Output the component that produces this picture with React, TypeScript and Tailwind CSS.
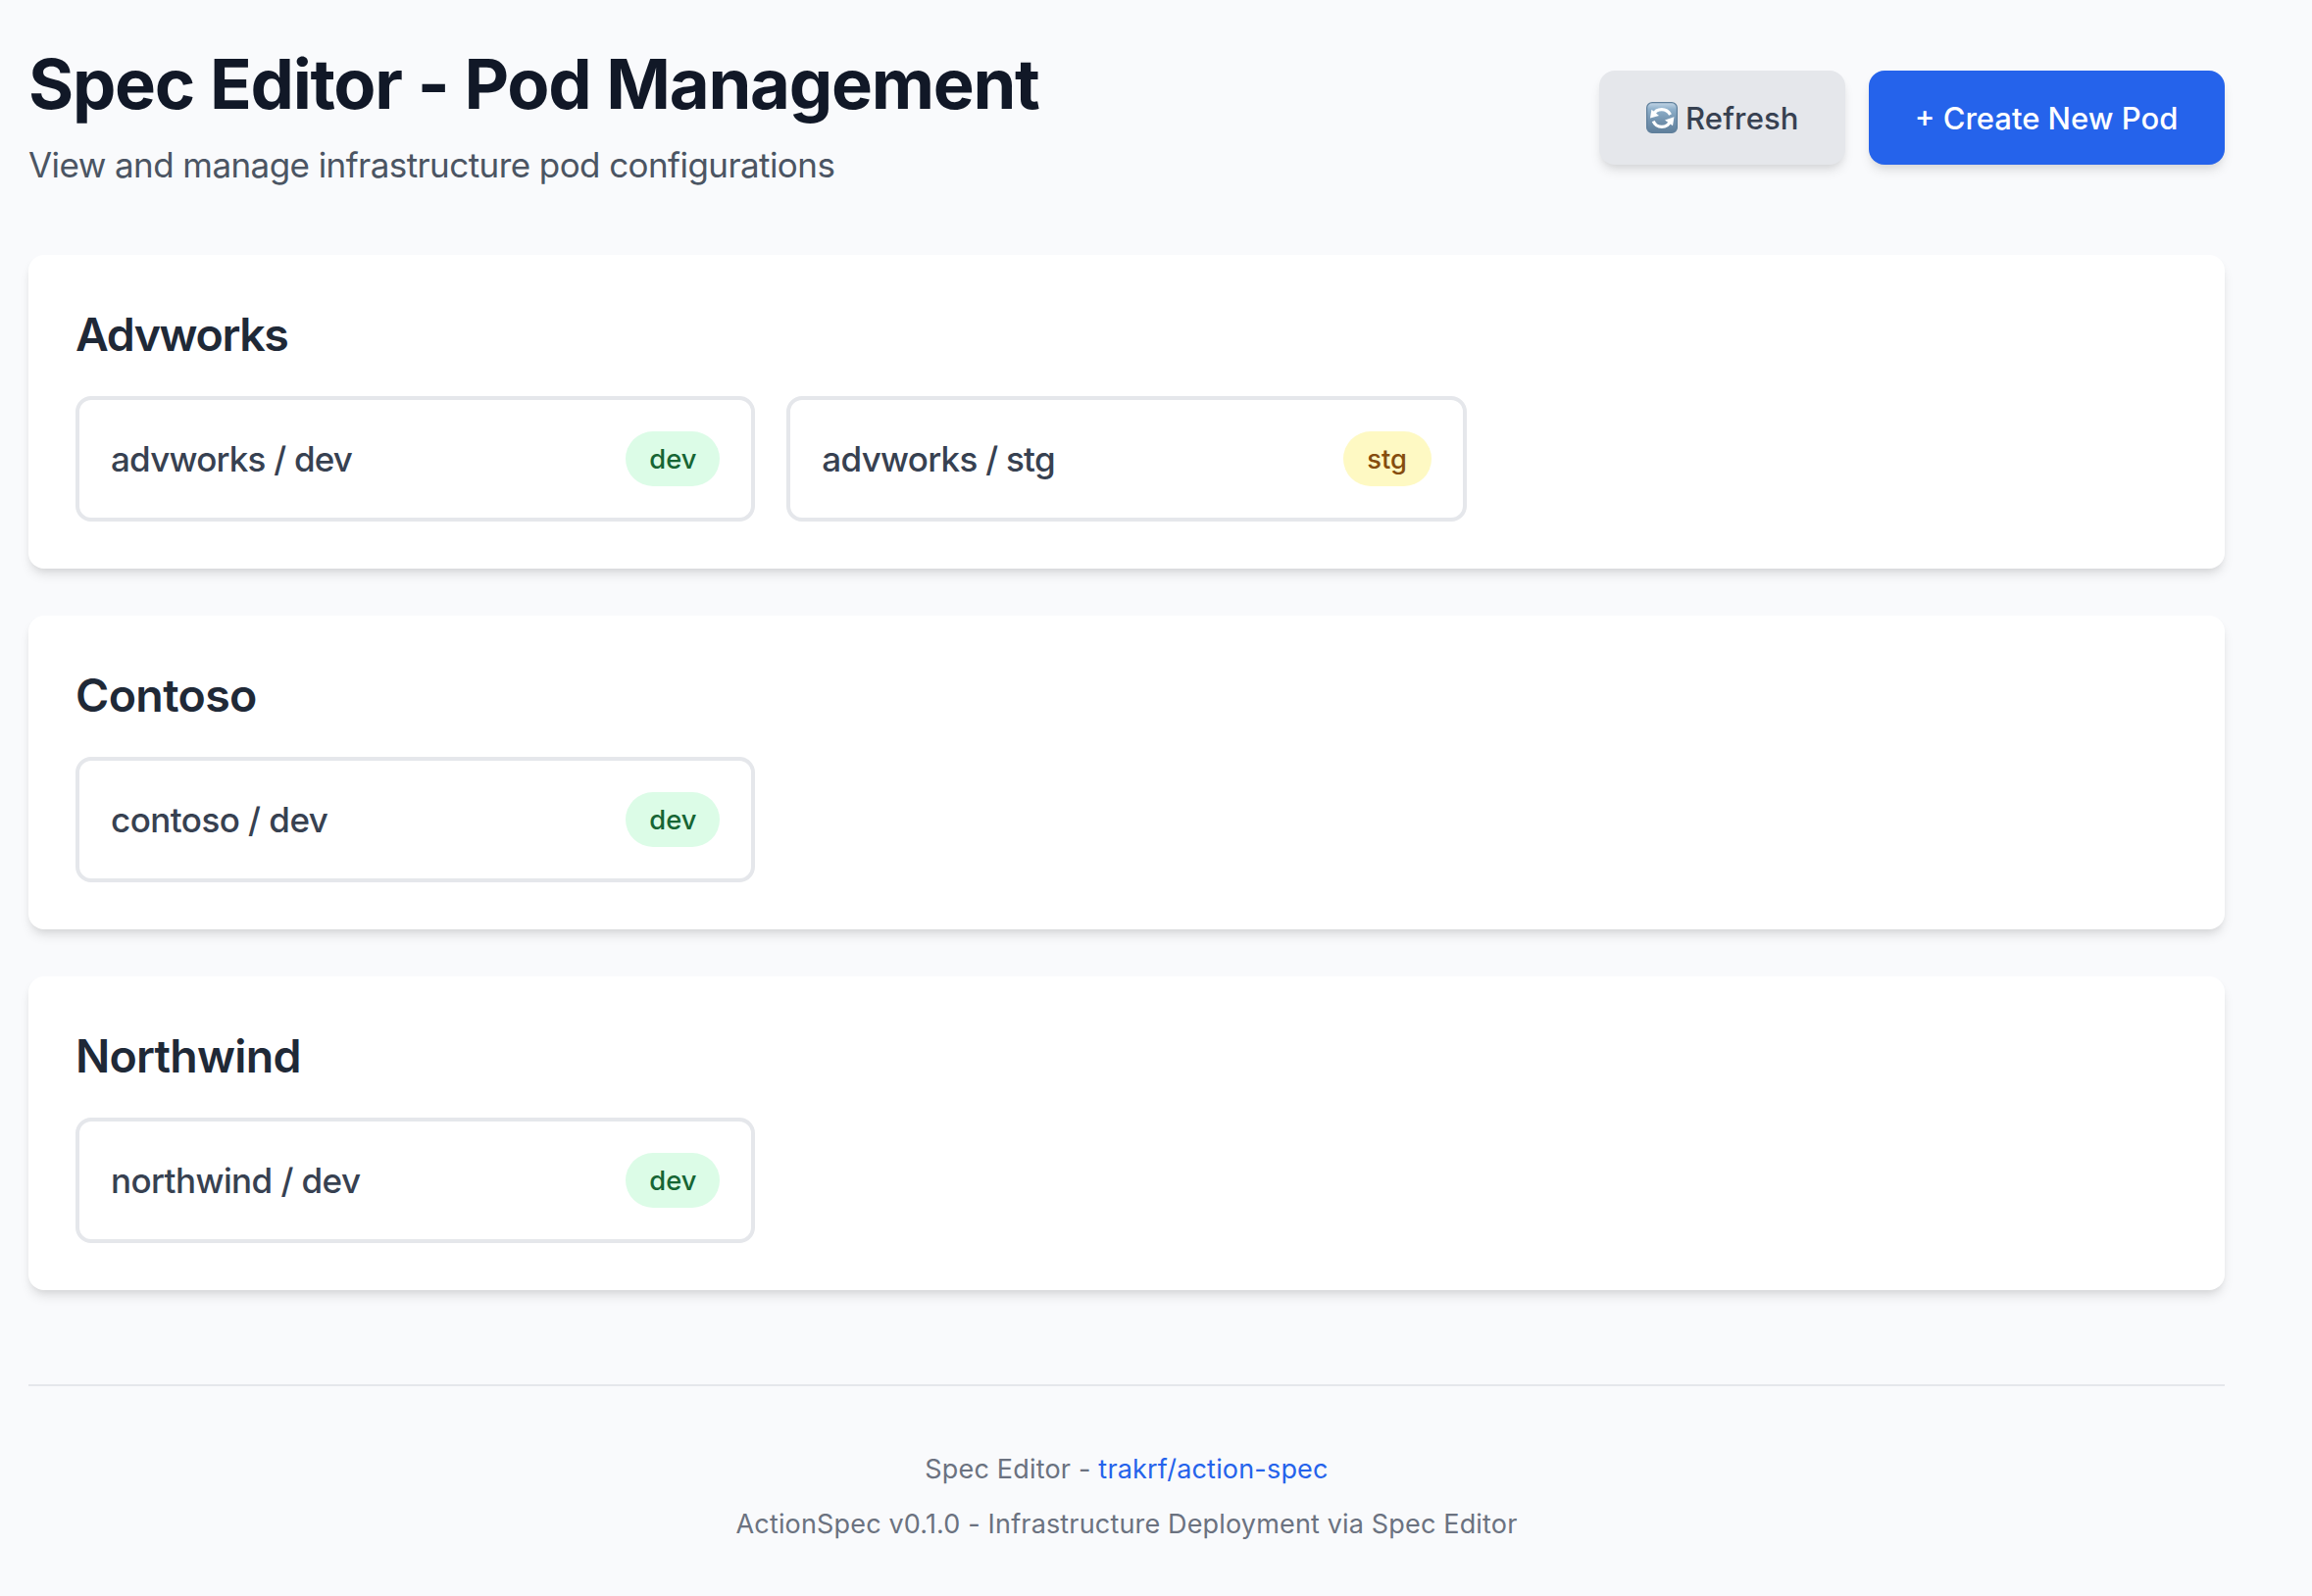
type Env = "dev" | "stg";

interface Pod {
  name: string;
  env: Env;
  tracking: string;
}

interface Customer {
  title: string;
  tracking: string;
  pods: Pod[];
}

const customers: Customer[] = [
  {
    title: "Advworks",
    tracking: "tracking-[-0.0302em]",
    pods: [
      { name: "advworks", env: "dev", tracking: "tracking-[-0.0225em]" },
      { name: "advworks", env: "stg", tracking: "tracking-[-0.0205em]" },
    ],
  },
  {
    title: "Contoso",
    tracking: "tracking-[-0.0135em]",
    pods: [{ name: "contoso", env: "dev", tracking: "tracking-[-0.0155em]" }],
  },
  {
    title: "Northwind",
    tracking: "tracking-[-0.0165em]",
    pods: [{ name: "northwind", env: "dev", tracking: "tracking-[-0.0165em]" }],
  },
];

const badgeStyles: Record<Env, string> = {
  dev: "bg-[#dcfce7] text-[#166534] w-24",
  stg: "bg-[#fef9c3] text-[#854d0e] w-[90px]",
};

function RefreshIcon() {
  return (
    <svg viewBox="0 0 32 32" className="size-8 shrink-0" aria-hidden="true">
      <defs>
        <linearGradient id="tile" x1="0" y1="0" x2="0" y2="1">
          <stop offset="0" stopColor="#c3d6e6" />
          <stop offset="0.22" stopColor="#8fb0cb" />
          <stop offset="0.6" stopColor="#7393af" />
          <stop offset="1" stopColor="#5f7f9b" />
        </linearGradient>
      </defs>
      <rect x="0.6" y="0.6" width="30.8" height="30.8" rx="5.5" fill="url(#tile)" stroke="#5f7f9b" strokeWidth="1.2" />
      <g fill="none" stroke="#fff" strokeWidth="3.2">
        <path d="M7.4 13C8.8 9.4 12 7.6 15.8 7.6c3.8 0 6.9 1.9 8.7 5.4" />
        <path d="M24.6 19.2c-1.4 3.900-4.800 6.200-8.800 6.200-3.800 0-7-2.200-8.600-5.800" />
      </g>
      <path fill="#fff" d="M5.4 7.8 4 16.4 13 14Z" />
      <path fill="#fff" d="M28.4 15.2 19 18.4 27 24.2Z" />
    </svg>
  );
}

function PodCard({ name, env, tracking }: Pod) {
  return (
    <div className="flex h-32 items-center justify-between rounded-2xl border-4 border-[#e5e7eb] bg-white px-8">
      <span className={`text-[35px] leading-[56px] font-medium text-[#374151] ${tracking}`}>
        {name} / {env}
      </span>
      <span
        className={`rounded-full pt-[9px] pb-[7px] text-center text-[27.3px] leading-10 font-medium ${badgeStyles[env]}`}
      >
        {env}
      </span>
    </div>
  );
}

function CustomerSection({ title, tracking, pods }: Customer) {
  return (
    <section className="rounded-2xl bg-white p-12 shadow-[0_8px_12px_-2px_rgba(0,0,0,0.1),0_4px_8px_-4px_rgba(0,0,0,0.1)]">
      <h2 className={`mb-8 pt-0.5 text-[46.5px] leading-[62px] font-semibold text-[#1f2937] ${tracking}`}>
        {title}
      </h2>
      <div className="grid grid-cols-3 gap-8">
        {pods.map((pod) => (
          <PodCard key={pod.env} {...pod} />
        ))}
      </div>
    </section>
  );
}

export default function App() {
  return (
    <div className="min-h-[1628px] bg-[#f9fafc] pt-11 pr-[89px] pl-[29px] font-['Inter',sans-serif]">
      <header className="mb-16 flex items-center justify-between">
        <div>
          <h1 className="pt-[3px] text-[70.5px] leading-[77px] font-bold tracking-[-0.0182em] text-[#111827] [word-spacing:0.6px]">
            Spec Editor - Pod Management
          </h1>
          <p className="mt-4 text-[35px] leading-[56px] tracking-[-0.0164em] text-[#4b5563]">
            View and manage infrastructure pod configurations
          </p>
        </div>
        <div className="flex gap-6">
          <button className="flex h-24 w-[251px] items-center gap-2 rounded-2xl bg-[#e5e7eb] pl-12 text-[31px] leading-12 font-medium tracking-[0.005em] text-[#374151] shadow-[0_8px_12px_-2px_rgba(0,0,0,0.1),0_4px_8px_-4px_rgba(0,0,0,0.1)]">
            <RefreshIcon />
            <span className="pt-0.5">Refresh</span>
          </button>
          <button className="h-24 w-[363px] rounded-2xl bg-[#2563eb] pt-0.5 pr-px text-[31px] leading-12 font-medium text-white shadow-[0_8px_12px_-2px_rgba(0,0,0,0.1),0_4px_8px_-4px_rgba(0,0,0,0.1)]">
            + Create New Pod
          </button>
        </div>
      </header>

      <main className="flex flex-col gap-12">
        {customers.map((customer) => (
          <CustomerSection key={customer.title} {...customer} />
        ))}
      </main>

      <footer className="mt-24 border-t-2 border-[#e5e7eb] pt-[65px] text-center text-[27px] leading-10 text-[#6b7280]">
        <p className="tracking-[0.0068em]">
          Spec Editor -{" "}
          <a href="#" className="text-[#2563eb]">
            trakrf/action-spec
          </a>
        </p>
        <p className="mt-4 tracking-[0.006em]">
          ActionSpec v0.1.0 - Infrastructure Deployment via Spec Editor
        </p>
      </footer>
    </div>
  );
}
